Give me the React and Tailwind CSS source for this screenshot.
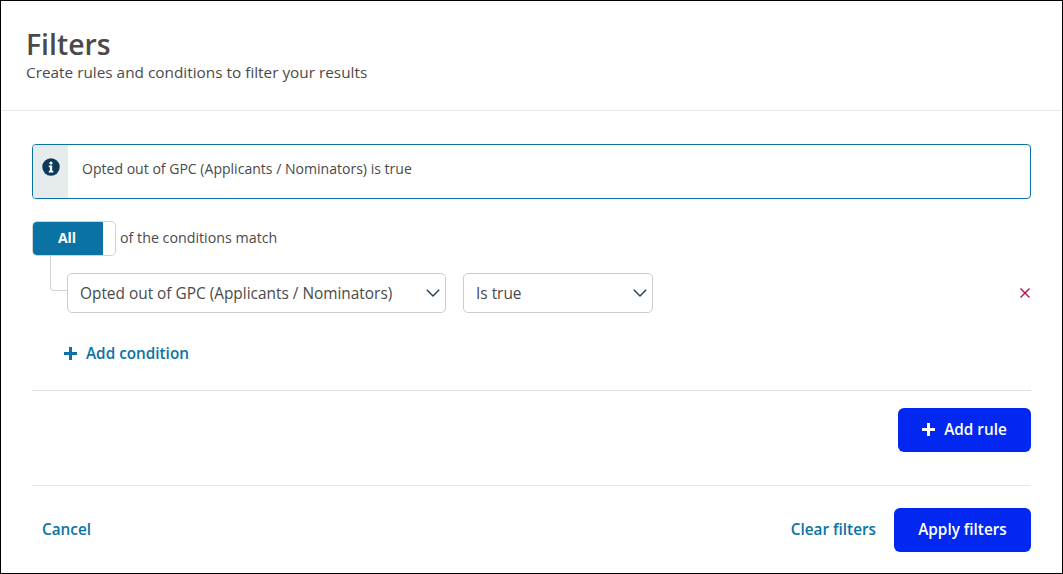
function InfoIcon() {
  return (
    <svg width="18" height="18" viewBox="0 0 18 18" className="block">
      <circle cx="9" cy="9" r="8.7" fill="#0b3a5b" />
      <circle cx="9" cy="5" r="1.6" fill="#fff" />
      <path d="M6.8 7.6h3.4v5.2h1.1v1.6H6.8v-1.6h1.1V9.2H6.8z" fill="#fff" />
    </svg>
  );
}

function PlusIcon({ className }) {
  return (
    <svg width="13" height="13" viewBox="0 0 13 13" className={className} fill="currentColor">
      <path d="M5 0h3v5h5v3H8v5H5V8H0V5h5z" />
    </svg>
  );
}

function Select({ label, className }) {
  return (
    <div className={`flex h-10 items-center justify-between rounded-[5px] border border-[#cccccc] bg-white pr-[5px] text-[15.4px] text-[#4a4a4a] ${className}`}>
      <span className="pt-[2px]">{label}</span>
      <svg width="14" height="8" viewBox="0 0 14 8" fill="none" stroke="#23405a" strokeWidth="1.4">
        <path d="M.8.8 7 7l6.2-6.2" />
      </svg>
    </div>
  );
}

export default function App() {
  return (
    <div className="flex h-[574px] w-[1063px] flex-col border border-black bg-white font-['Open_Sans',sans-serif] text-[#4a4a4a]">
      {/* Header */}
      <div className="h-[110px] border-b border-[#e8e8e8] pl-[25px] pt-[24px]">
        <h1 className="text-[28.4px] font-semibold leading-[38px]">Filters</h1>
        <p className="text-[15.35px] leading-[19px]">Create rules and conditions to filter your results</p>
      </div>

      {/* Body */}
      <div className="flex flex-1 flex-col px-[31px] pt-[33px]">
        <div className="flex h-[55px] items-stretch rounded-[4px] border border-[#0a73a3]">
          <div className="flex w-[35px] justify-center rounded-l-[3px] bg-[#e6ebee] pt-[13px]">
            <InfoIcon />
          </div>
          <div className="flex items-center pb-[6px] pl-[14px] text-[14.05px]">Opted out of GPC (Applicants / Nominators) is true</div>
        </div>

        <div className="relative mt-[22px] flex items-center">
          <div className="flex h-[35px] w-[84px] rounded-[5px] border border-[#cfd4d8] bg-white">
            <div className="flex w-[70px] items-center justify-center rounded-l-[4px] bg-[#0a73a3] pb-[2px] pr-[2px] text-[14px] font-bold text-white">All</div>
          </div>
          <span className="ml-[4px] pb-[2px] text-[14.25px]">of the conditions match</span>
          {/* connector */}
          <div className="absolute left-[18px] top-[35px] h-[35px] w-[17px] rounded-bl-[4px] border-b border-l border-[#cfd4d8]" />
        </div>

        <div className="mt-[17px] flex items-center pl-[35px]">
          <Select label="Opted out of GPC (Applicants / Nominators)" className="w-[379px] pl-[12px]" />
          <Select label="Is true" className="ml-[17px] w-[190px] pl-[12px]" />
          <svg width="10" height="10" viewBox="0 0 10 10" className="ml-auto mr-px" fill="none" stroke="#b3123f" strokeWidth="1.4">
            <path d="M.5.5l9 9M9.5.5l-9 9" />
          </svg>
        </div>

        <div className="mt-[30px] flex items-center pl-[32px] text-[15.3px] font-semibold text-[#0a73a3]">
          <PlusIcon />
          <span className="-mt-px ml-[9px]">Add condition</span>
        </div>

        <div className="mt-[25px] border-t border-[#dddddd]" />

        <div className="mt-[17px] flex justify-end">
          <button className="flex h-[44px] w-[133px] items-center justify-center rounded-[6px] bg-[#0227f0] text-[15.3px] font-semibold text-white">
            <PlusIcon />
            <span className="-mt-px ml-[9px]">Add rule</span>
          </button>
        </div>

        <div className="mt-[33px] border-t border-[#e8e8e8]" />

        {/* Footer */}
        <div className="mt-[22px] flex items-center">
          <span className="-mt-px ml-[10px] text-[15.3px] font-semibold text-[#0a73a3]">Cancel</span>
          <span className="-mt-px ml-auto text-[15.3px] font-semibold text-[#0a73a3]">Clear filters</span>
          <button className="ml-[18px] h-[44px] w-[137px] rounded-[6px] bg-[#0227f0] pb-px text-[15.3px] font-semibold text-white">Apply filters</button>
        </div>
      </div>
    </div>
  );
}
